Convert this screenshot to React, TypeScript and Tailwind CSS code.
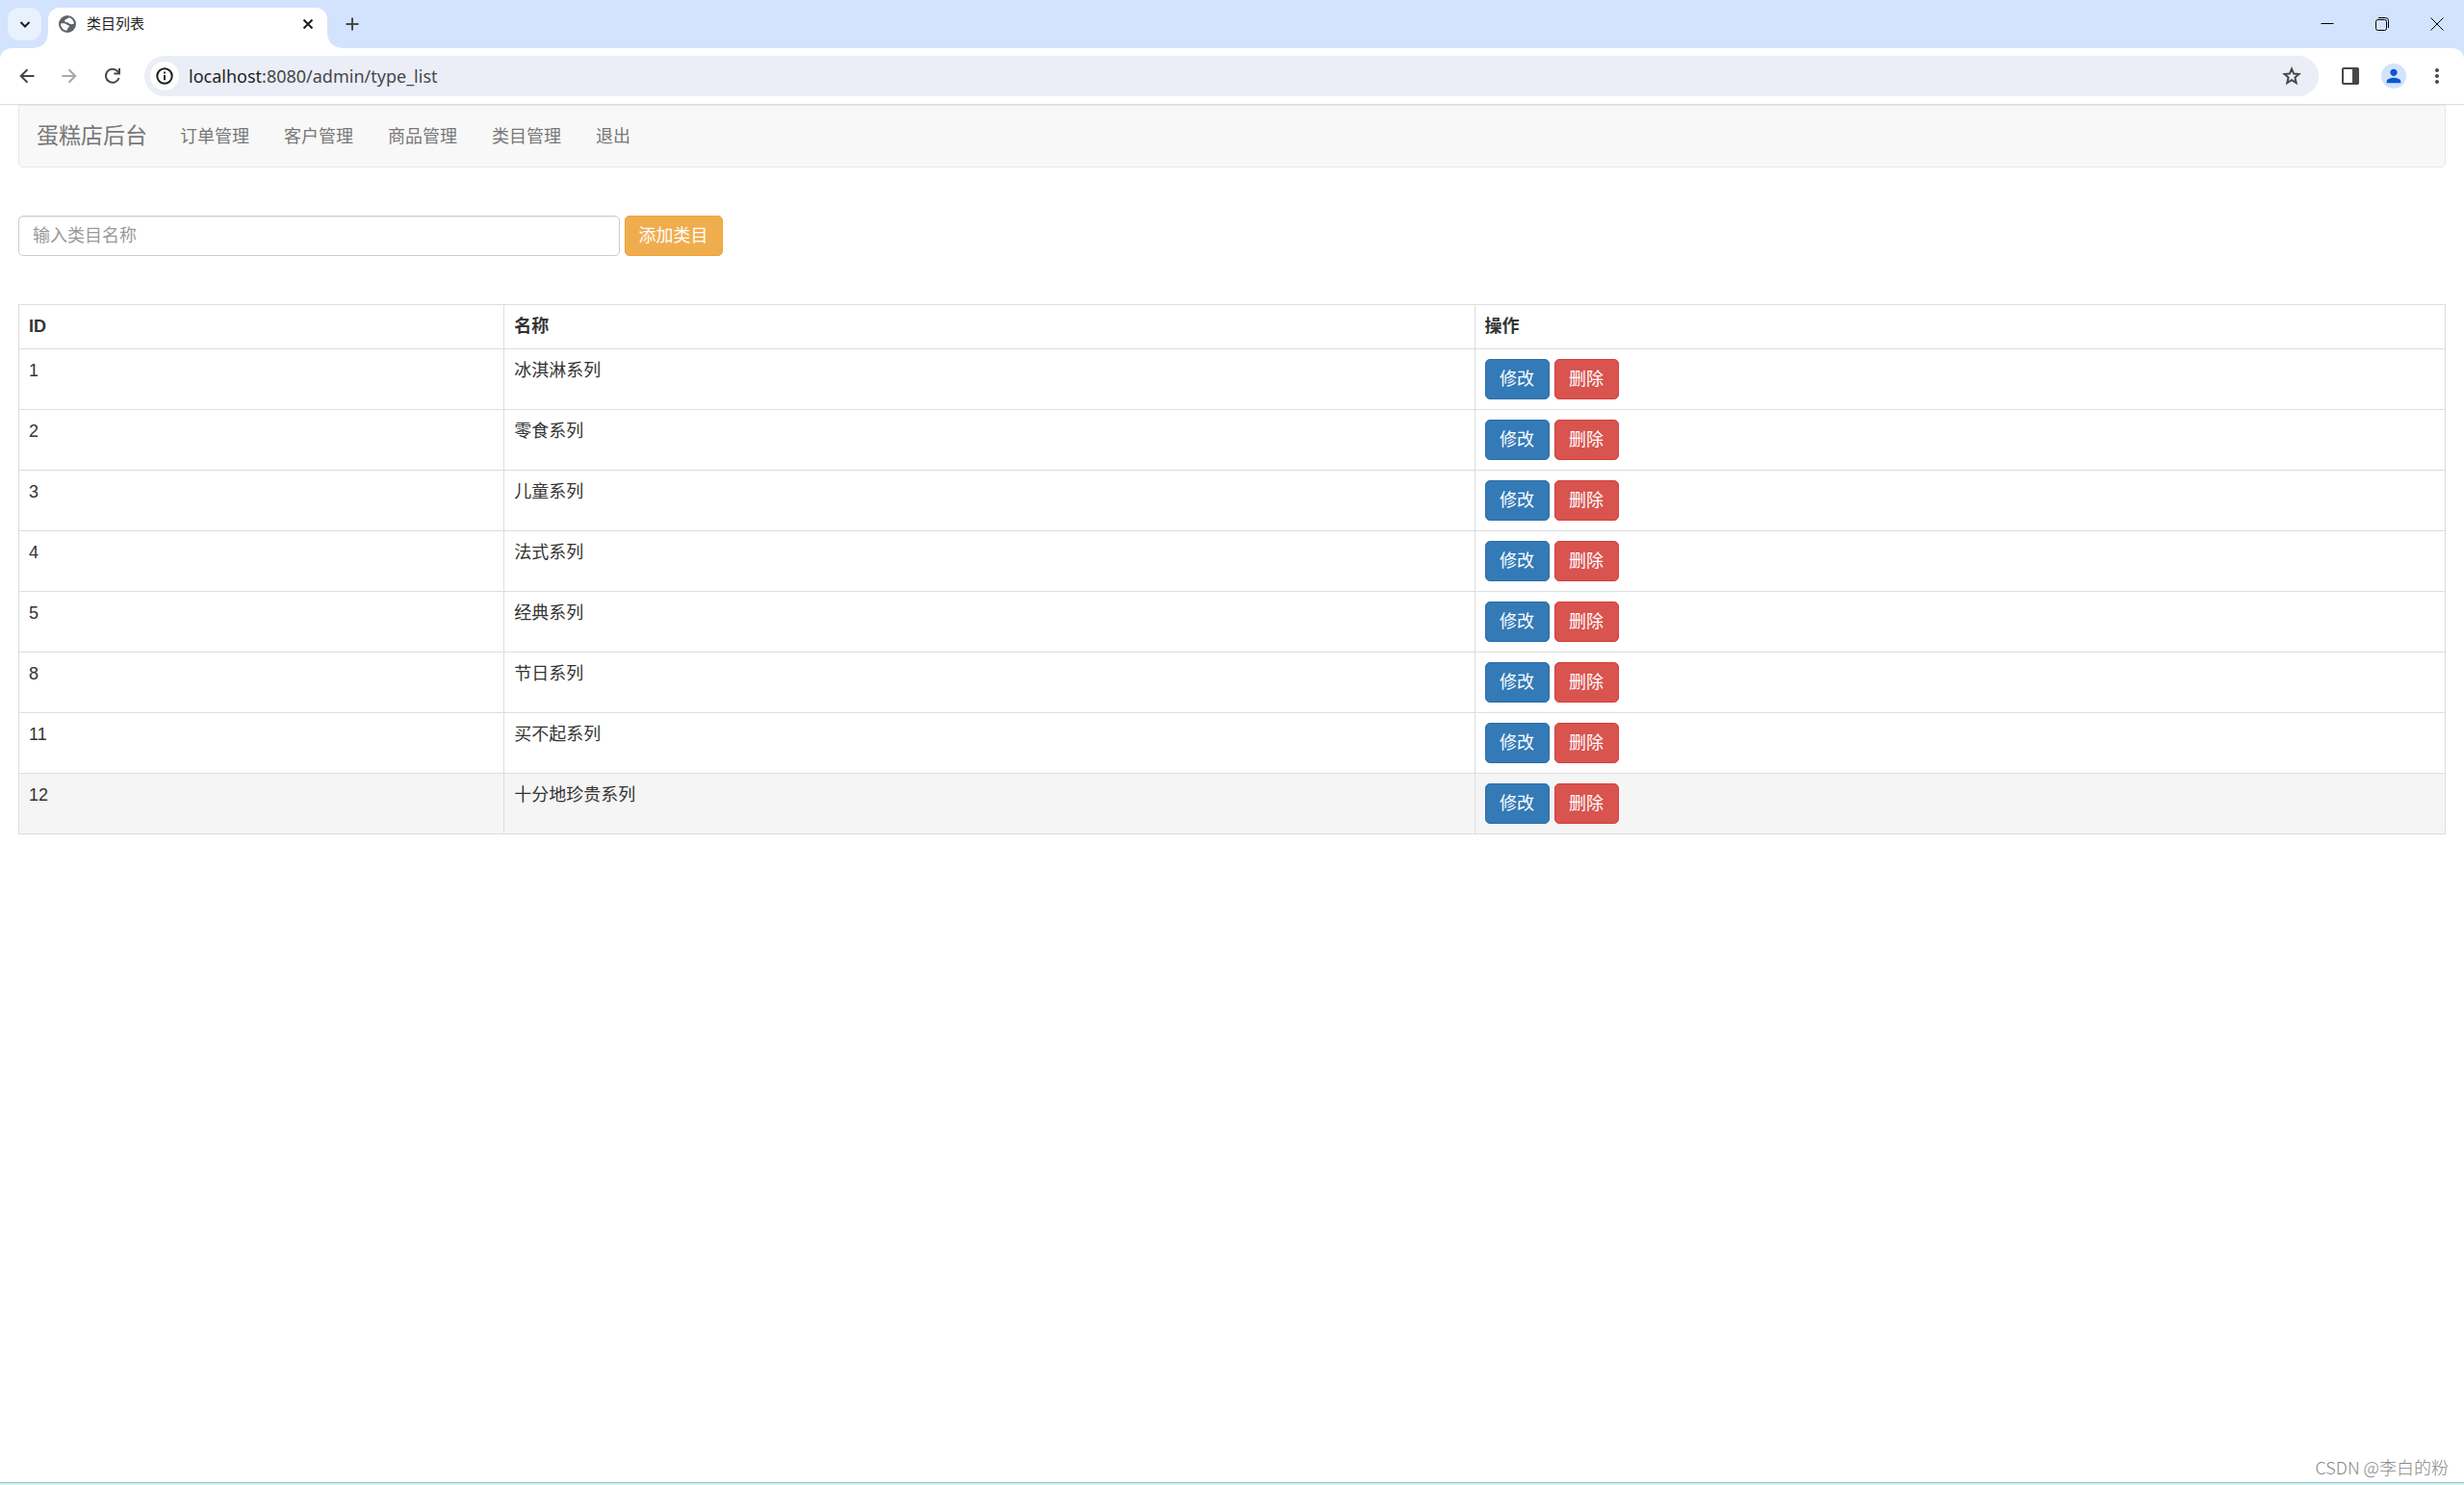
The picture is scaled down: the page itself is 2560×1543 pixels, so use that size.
import type { ReactNode } from 'react';
import { MdMoreVert, MdPerson } from 'react-icons/md';

interface Category {
  id: number;
  name: string;
}

const navItems = ['订单管理', '客户管理', '商品管理', '类目管理', '退出'];

const categories: Category[] = [
  { id: 1, name: '冰淇淋系列' },
  { id: 2, name: '零食系列' },
  { id: 3, name: '儿童系列' },
  { id: 4, name: '法式系列' },
  { id: 5, name: '经典系列' },
  { id: 8, name: '节日系列' },
  { id: 11, name: '买不起系列' },
  { id: 12, name: '十分地珍贵系列' },
];

// currently highlighted row
const activeId = 12;

interface IconButtonProps {
  label: string;
  className?: string;
  children: ReactNode;
}

function IconButton({ label, className = '', children }: IconButtonProps) {
  return (
    <button type="button" aria-label={label} className={`flex shrink-0 items-center justify-center ${className}`}>
      {children}
    </button>
  );
}

// 20x20 outline icon, drawn with a 2px stroke
function LineIcon({ children }: { children: ReactNode }) {
  return (
    <svg viewBox="0 0 20 20" className="h-5 w-5" fill="none" stroke="currentColor" strokeWidth="2">
      {children}
    </svg>
  );
}

function GlobeIcon() {
  return (
    <svg viewBox="0 0 18 18" className="h-[18px] w-[18px]" fill="#fff">
      <circle cx="9" cy="9" r="9" fill="#5f6368" />
      <path d="M10.5 2.3C9.6 3.8 6.8 3.6 6.2 5.2C5.8 6.6 7.6 7.4 9.8 7.2C10.6 9 12.8 9.6 15.8 8.8C15.8 5.6 13.6 2.9 10.5 2.3Z" />
      <path d="M2.1 8.6C4.8 8 7.6 8.4 9 10C10.6 10 11.4 11 10.6 12.2C9.4 12.6 9 14 8.6 15.8C4.8 15.8 2 12.6 2.1 8.6Z" />
    </svg>
  );
}

function TabStrip() {
  return (
    <div className="flex h-[50px] bg-[#d3e3fd] text-[#1f1f1f]">
      <IconButton label="搜索标签页" className="mt-2 ml-2 h-[34px] w-[35px] rounded-xl bg-[#e9f1fe]">
        <LineIcon>
          <path d="M5.5 8L10 12.5L14.5 8" />
        </LineIcon>
      </IconButton>
      <div className="relative mt-2 ml-[7px] flex w-[290px] items-center rounded-t-xl bg-white pr-[10px] pb-2 pl-[11px]">
        {/* curved feet of the active tab */}
        <span className="absolute bottom-0 -left-[14px] h-[14px] w-[14px] bg-[radial-gradient(circle_at_0_0,transparent_13px,white_14px)]" />
        <span className="absolute -right-[14px] bottom-0 h-[14px] w-[14px] bg-[radial-gradient(circle_at_100%_0,transparent_13px,white_14px)]" />
        <GlobeIcon />
        <span className="ml-[11px] flex-1 text-[15px]">类目列表</span>
        <IconButton label="关闭标签页" className="h-5 w-5">
          <LineIcon>
            <path d="M5.5 5.5L14.5 14.5M14.5 5.5L5.5 14.5" />
          </LineIcon>
        </IconButton>
      </div>
      <IconButton label="新建标签页" className="mt-2 ml-[14px] h-[34px] w-6 text-[#474747]">
        <LineIcon>
          <path d="M10 3.5V16.5M3.5 10H16.5" />
        </LineIcon>
      </IconButton>
      <div className="ml-auto flex text-black">
        <IconButton label="最小化" className="w-[57px]">
          <svg viewBox="0 0 14 14" className="h-[14px] w-[14px]" stroke="currentColor">
            <path d="M0.5 6.5H13.5" />
          </svg>
        </IconButton>
        <IconButton label="还原" className="w-[57px]">
          <svg viewBox="0 0 14 14" className="h-[14px] w-[14px]" fill="none" stroke="currentColor">
            <rect x="0.5" y="2.5" width="11" height="11" rx="2" />
            <path d="M3 0.5H10.5A3 3 0 0 1 13.5 3.5V11" />
          </svg>
        </IconButton>
        <IconButton label="关闭" className="w-[57px]">
          <svg viewBox="0 0 14 14" className="h-[14px] w-[14px]" stroke="currentColor">
            <path d="M0.5 0.5L13.5 13.5M13.5 0.5L0.5 13.5" />
          </svg>
        </IconButton>
      </div>
    </div>
  );
}

function AddressBar() {
  return (
    <div className="bg-[#d3e3fd]">
      <div className="flex h-[59px] items-center rounded-t-xl border-b border-[#dcdcdc] bg-white pr-4 text-[#474747]">
        <IconButton label="后退" className="ml-4 h-6 w-6">
          <LineIcon>
            <path d="M17.5 10H4M10.5 3.2L3.7 10L10.5 16.8" />
          </LineIcon>
        </IconButton>
        <IconButton label="前进" className="ml-5 h-6 w-6 text-[#a8a8a8]">
          <LineIcon>
            <path d="M2.5 10H16M9.5 3.2L16.3 10L9.5 16.8" />
          </LineIcon>
        </IconButton>
        <IconButton label="重新加载" className="ml-[21px] h-6 w-6">
          <LineIcon>
            <path d="M16.6 12A7 7 0 1 1 15.2 5.2L16.6 7" />
            <path d="M17 2V7.6H11.4" />
          </LineIcon>
        </IconButton>
        <div className="ml-[21px] flex h-[42px] flex-1 items-center rounded-full bg-[#ebeef7] pr-4 pl-[6px]">
          <IconButton label="网站信息" className="h-[30px] w-[30px] rounded-full bg-white text-[#1f1f1f]">
            <LineIcon>
              <circle cx="10" cy="10" r="7.7" />
              <path d="M10 9V14.2M10 5.6V7.5" />
            </LineIcon>
          </IconButton>
          <div className="ml-[10px] flex-1 font-['Noto_Sans',sans-serif] text-lg text-[#474747]">
            <span className="text-[#1f1f1f]">localhost</span>:8080/admin/type_list
          </div>
          <IconButton label="收藏" className="h-6 w-6">
            <LineIcon>
              <path d="M10 2.6L12.1 7.6L17.5 8L13.4 11.6L14.7 17L10 14.1L5.3 17L6.6 11.6L2.5 8L7.9 7.6Z" />
            </LineIcon>
          </IconButton>
        </div>
        <IconButton label="侧边栏" className="ml-[23px] h-5 w-5">
          <svg viewBox="0 0 18 18" className="h-[18px] w-[18px]" fill="none" stroke="currentColor">
            <rect x="1" y="1" width="16" height="16" rx="1" strokeWidth="2" />
            <path d="M11.5 1H17V17H11.5Z" fill="currentColor" />
          </svg>
        </IconButton>
        <IconButton label="个人资料" className="ml-[22px] h-[26px] w-[26px] rounded-full bg-[#d3e3fd] text-[#0b57d0]">
          <MdPerson className="h-[22px] w-[22px]" />
        </IconButton>
        <IconButton label="更多" className="ml-5 h-6 w-6">
          <MdMoreVert className="h-6 w-6" />
        </IconButton>
      </div>
    </div>
  );
}

function AdminNav() {
  return (
    <nav className="flex h-[65px] items-center rounded-b-[5px] border border-[#e7e7e7] bg-[#f8f8f8] px-[18px] text-[#777]">
      <a href="#" className="mr-4 text-[23px]">蛋糕店后台</a>
      {navItems.map((item) => (
        <a key={item} href="#" className="px-[18px] text-lg">
          {item}
        </a>
      ))}
    </nav>
  );
}

function CategoryForm() {
  return (
    <form className="flex gap-[5px]">
      <input
        type="text"
        aria-label="类目名称"
        placeholder="输入类目名称"
        className="h-[42px] w-[calc(25%-6px)] rounded-[5px] border border-[#ccc] px-[14px] text-[#555] shadow-[inset_0_1px_1px_rgba(0,0,0,0.075)] placeholder:text-[#999]"
      />
      <button
        type="button"
        className="h-[42px] rounded-[5px] border border-[#eea236] bg-[#f0ad4e] px-[14px] text-white"
      >
        添加类目
      </button>
    </form>
  );
}

function CategoryTable() {
  return (
    <table className="w-full table-fixed border-collapse border border-[#ddd] text-left">
      <thead>
        <tr className="h-[46px]">
          <th className="w-1/5 border border-[#ddd] px-[10px]">ID</th>
          <th className="w-2/5 border border-[#ddd] px-[10px]">名称</th>
          <th className="w-2/5 border border-[#ddd] px-[10px]">操作</th>
        </tr>
      </thead>
      <tbody>
        {categories.map(({ id, name }) => (
          <tr key={id} className={id === activeId ? 'bg-[#f5f5f5]' : ''}>
            <td className="border border-[#ddd] p-[10px] align-top">{id}</td>
            <td className="border border-[#ddd] p-[10px] align-top">{name}</td>
            <td className="border border-[#ddd] p-[10px] align-top">
              <div className="flex gap-[5px]">
                <button
                  type="button"
                  className="h-[42px] w-[67px] rounded-[5px] border border-[#2e6da4] bg-[#337ab7] text-white"
                >
                  修改
                </button>
                <button
                  type="button"
                  className="h-[42px] w-[67px] rounded-[5px] border border-[#d43f3a] bg-[#d9534f] text-white"
                >
                  删除
                </button>
              </div>
            </td>
          </tr>
        ))}
      </tbody>
    </table>
  );
}

export default function App() {
  return (
    <div className="flex min-h-screen flex-col bg-white font-['Liberation_Sans','Noto_Sans_CJK_SC',sans-serif]">
      <TabStrip />
      <AddressBar />
      <main className="flex flex-1 flex-col px-[19px] text-lg leading-[25px] text-[#333]">
        <AdminNav />
        <div className="mt-[50px]">
          <CategoryForm />
        </div>
        <div className="mt-[50px]">
          <CategoryTable />
        </div>
      </main>
      <footer className="border-b-2 border-[#c8f5f2]">
        <p className="border-b border-[#9cc4c8] pr-4 pb-1 text-right font-['Noto_Sans_CJK_SC',sans-serif] text-lg leading-6 font-light text-[#888]">
          CSDN @李白的粉
        </p>
      </footer>
    </div>
  );
}
